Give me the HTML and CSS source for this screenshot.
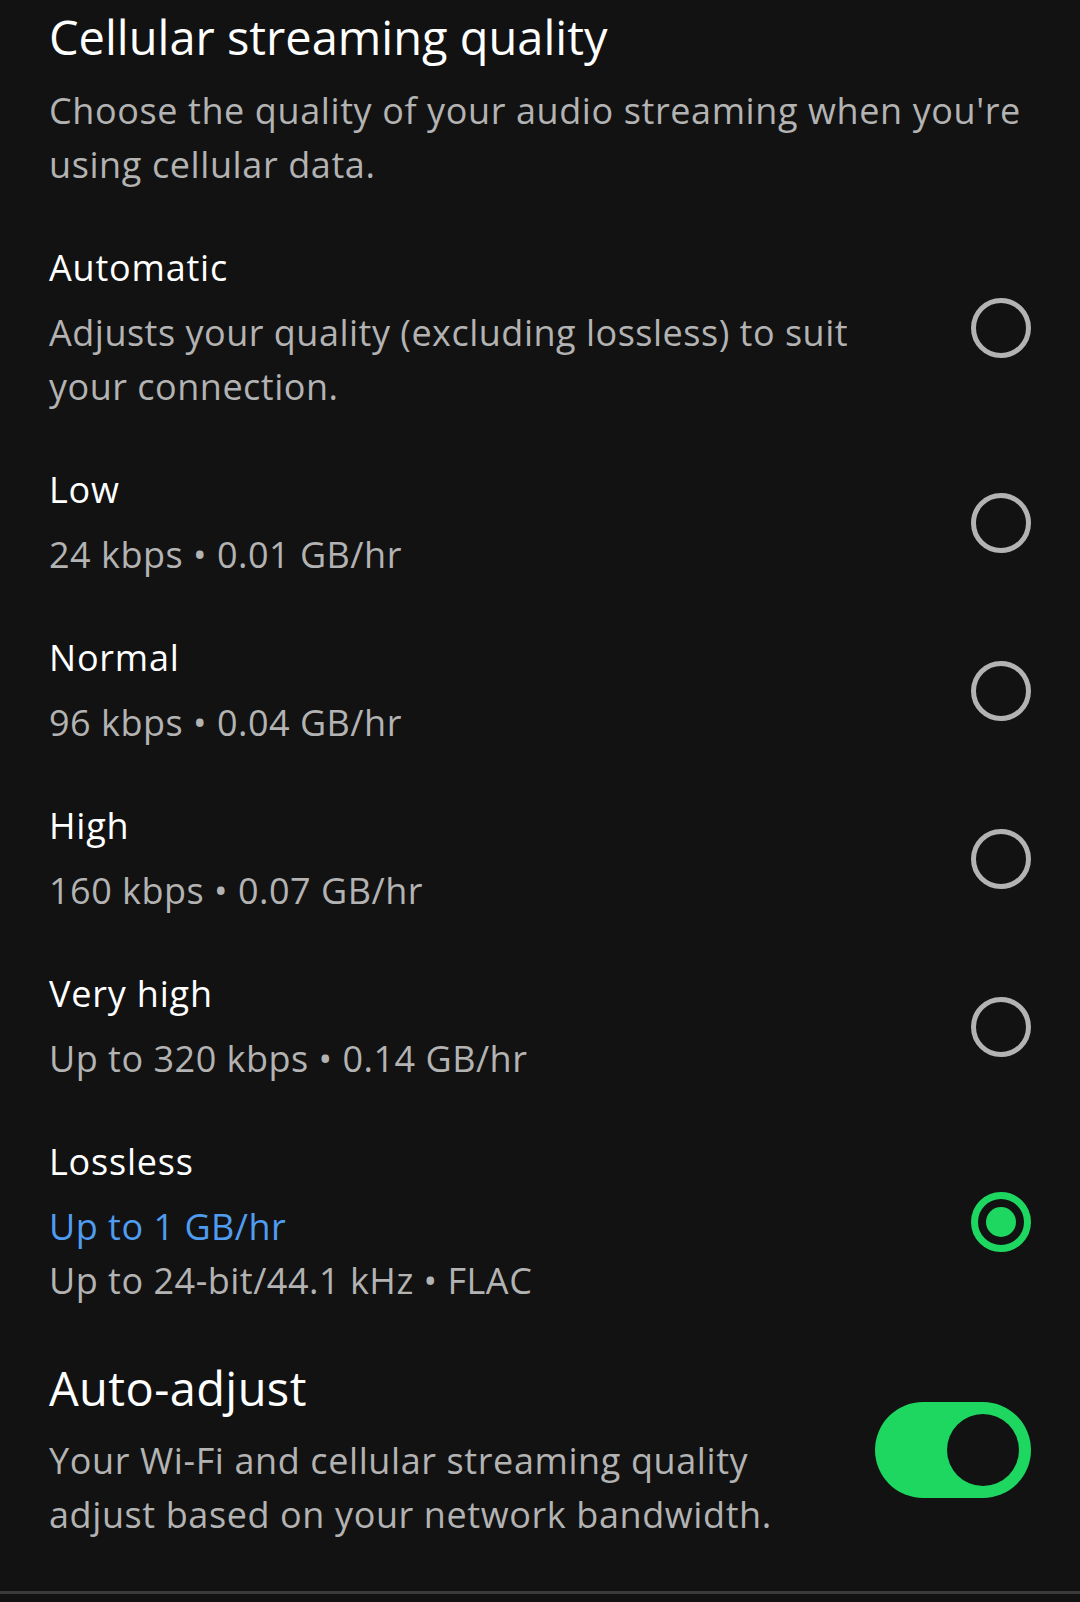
FILE: index.html
```html
<!DOCTYPE html>
<html lang="en">
<head>
    <meta charset="UTF-8">
    <meta name="viewport" content="width=device-width, initial-scale=1.0">
    <title>Cellular streaming quality</title>
    <link rel="stylesheet" href="styles.css">
</head>
<body>

    <!-- Section heading -->
    <div class="section-head">
        <h1>Cellular streaming quality</h1>
        <p class="section-desc">Choose the quality of your audio streaming when you're using cellular data.</p>
    </div>

    <!-- Quality options -->
    <ul class="option-list">
        <li class="option">
            <div class="option-text">
                <div class="option-name">Automatic</div>
                <div class="option-desc">Adjusts your quality (excluding lossless) to suit your connection.</div>
            </div>
            <span class="radio"></span>
        </li>
        <li class="option">
            <div class="option-text">
                <div class="option-name">Low</div>
                <div class="option-desc">24 kbps • 0.01 GB/hr</div>
            </div>
            <span class="radio"></span>
        </li>
        <li class="option">
            <div class="option-text">
                <div class="option-name">Normal</div>
                <div class="option-desc">96 kbps • 0.04 GB/hr</div>
            </div>
            <span class="radio"></span>
        </li>
        <li class="option">
            <div class="option-text">
                <div class="option-name">High</div>
                <div class="option-desc">160 kbps • 0.07 GB/hr</div>
            </div>
            <span class="radio"></span>
        </li>
        <li class="option">
            <div class="option-text">
                <div class="option-name">Very high</div>
                <div class="option-desc">Up to 320 kbps • 0.14 GB/hr</div>
            </div>
            <span class="radio"></span>
        </li>
        <li class="option">
            <div class="option-text">
                <div class="option-name">Lossless</div>
                <div class="option-desc">
                    <span class="option-note">Up to 1 GB/hr</span>
                    Up to 24-bit/44.1 kHz • FLAC
                </div>
            </div>
            <span class="radio checked"></span>
        </li>
    </ul>

    <!-- Auto-adjust toggle -->
    <div class="setting">
        <div class="option-text">
            <h2>Auto-adjust</h2>
            <p class="section-desc">Your Wi-Fi and cellular streaming quality adjust based on your network bandwidth.</p>
        </div>
        <span class="toggle on"><span class="knob"></span></span>
    </div>

    <div class="divider"></div>

</body>
</html>
```

FILE: styles.css
```css
/* General Layout Styles */
body {
    font-family: 'Open Sans', 'Noto Sans', sans-serif;
    background-color: #121212;
    color: #fff;
    margin: 0;
    padding: 7px 49px 0 49px;
}

h1, h2 {
    font-size: 47px;
    font-weight: 400;
    line-height: 60px;
    margin: 0;
}

h2 {
    letter-spacing: 0.4px;
}

.section-desc {
    font-size: 36px;
    line-height: 54px;
    letter-spacing: 0.6px;
    color: #b3b3b3;
    margin: 17px 0 0 0;
}

/* Option list */
.option-list {
    list-style: none;
    margin: 49px 0 0 0;
    padding: 0;
    display: flex;
    flex-direction: column;
    gap: 49px;
}

.option {
    display: flex;
    align-items: center;
    justify-content: space-between;
    gap: 48px;
}

.option-text {
    flex: 1;
}

.option-name {
    font-size: 36px;
    line-height: 54px;
    letter-spacing: 0.8px;
}

.option-desc {
    font-size: 36px;
    line-height: 54px;
    letter-spacing: 0.5px;
    color: #b3b3b3;
    margin-top: 11px;
}

.option-note {
    display: block;
    color: #4f9cf0;
}

/* Radio buttons */
.radio {
    flex: none;
    width: 60px;
    height: 60px;
    box-sizing: border-box;
    border: 5px solid #b3b3b3;
    border-radius: 50%;
    position: relative;
}

.radio.checked {
    border: 7px solid #1ed760;
}

.radio.checked::after {
    content: '';
    position: absolute;
    left: 8px;
    top: 8px;
    width: 30px;
    height: 30px;
    border-radius: 50%;
    background-color: #1ed760;
}

/* Toggle setting */
.setting {
    display: flex;
    align-items: center;
    gap: 48px;
    margin-top: 50px;
}

.setting .section-desc {
    margin-top: 16px;
}

.toggle {
    flex: none;
    width: 156px;
    height: 96px;
    box-sizing: border-box;
    padding: 12px;
    border-radius: 48px;
    background-color: #1ed760;
    display: flex;
    justify-content: flex-end;
}

.toggle .knob {
    width: 72px;
    height: 72px;
    border-radius: 50%;
    background-color: #121212;
}

.divider {
    height: 3px;
    background-color: #3a3a3a;
    margin: 49px -49px 0 -49px;
}
```
